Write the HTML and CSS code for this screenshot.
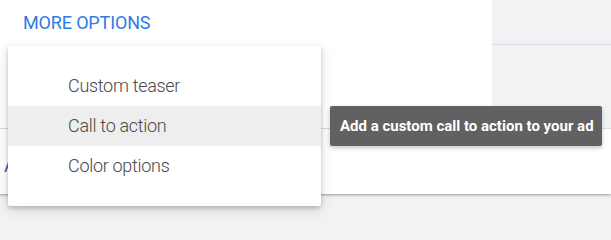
FILE: index.html
```html
<!DOCTYPE html>
<html lang="en">
<head>
<meta charset="utf-8">
<title>More options</title>
<link rel="stylesheet" href="styles.css">
</head>
<body>
<div class="page">
  <div class="top-row">
    <section class="panel">
      <a class="more-link" href="#">MORE OPTIONS</a>
    </section>
    <aside class="side">
      <div class="side-head"></div>
    </aside>
  </div>
  <section class="card">
    <a class="card-link" href="#">ADD</a>
  </section>

  <ul class="menu">
    <li class="menu-item">Custom teaser</li>
    <li class="menu-item is-hover">Call to action</li>
    <li class="menu-item">Color options</li>
  </ul>
  <div class="tooltip">Add a custom call to action to your ad</div>
</div>
</body>
</html>
```

FILE: styles.css
```css
html, body {
  margin: 0;
  padding: 0;
}
body {
  background: #f1f2f4;
  font-family: Roboto, "Liberation Sans", Arial, sans-serif;
  width: 611px;
  height: 220px;
  overflow: hidden;
}
.page {
  position: relative;
  width: 611px;
  height: 220px;
}
.top-row {
  display: flex;
  height: 128px;
}
.panel {
  width: 492px;
  background: #ffffff;
  padding: 12px 0 0 23px;
  box-sizing: border-box;
}
.more-link {
  color: #2f7be6;
  font-size: 18px;
  text-decoration: none;
  line-height: 21px;
  display: inline-block;
  letter-spacing: -0.15px;
}
.side {
  flex: 1;
}
.side-head {
  height: 44px;
  border-bottom: 1px solid #dadce0;
}
.card {
  background: #ffffff;
  border-top: 1px solid #dadce0;
  height: 66px;
  box-sizing: border-box;
  padding: 26px 0 0 4px;
  box-shadow: 0 1px 2px rgba(0,0,0,0.28), 0 2px 3px rgba(0,0,0,0.08);
}
.card-link {
  color: #3b52e6;
  font-size: 18px;
  text-decoration: none;
  line-height: 21px;
}
.menu {
  position: absolute;
  left: 8px;
  top: 46px;
  width: 313px;
  margin: 0;
  padding: 20px 0;
  list-style: none;
  background: #ffffff;
  border-radius: 2px;
  box-shadow: 0 2px 4px rgba(0,0,0,0.2), 0 4px 14px rgba(0,0,0,0.12);
}
.menu-item {
  height: 40px;
  line-height: 40px;
  padding-left: 60px;
  font-family: "Roboto Light", Roboto, "Liberation Sans", sans-serif;
  font-size: 18px;
  font-weight: 300;
  letter-spacing: -0.3px;
  color: #4a4a4a;
}
.menu-item.is-hover {
  background: #eeeeee;
}
.tooltip {
  position: absolute;
  left: 330px;
  top: 106px;
  width: 272px;
  height: 40px;
  box-sizing: border-box;
  padding-left: 10px;
  line-height: 40px;
  background: #616161;
  color: #ffffff;
  font-size: 15px;
  font-weight: 700;
  border-radius: 2px;
  white-space: nowrap;
  box-shadow: 0 2px 4px rgba(0,0,0,0.22);
}
```
